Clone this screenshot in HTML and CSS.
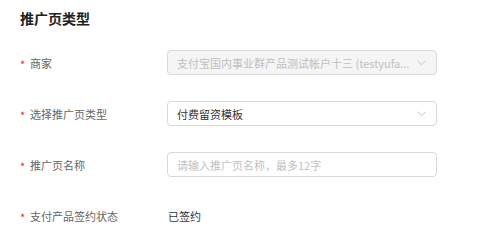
FILE: index.html
```html
<!DOCTYPE html>
<html lang="zh-CN">
<head>
  <meta charset="UTF-8">
  <title>推广页类型</title>
  <link rel="stylesheet" href="styles.css">
</head>
<body>
  <div class="panel">
    <h2 class="title">推广页类型</h2>

    <div class="form">
      <div class="row">
        <label class="label"><span class="req">*</span>商家</label>
        <div class="field select disabled">
          <span class="value">支付宝国内事业群产品测试帐户十三 (testyufa...</span>
          <svg class="arrow" viewBox="0 0 10 6" width="9" height="6"><path d="M0.5 0.5 L5 5 L9.5 0.5" fill="none" stroke="#c0c0c0" stroke-width="1"/></svg>
        </div>
      </div>

      <div class="row">
        <label class="label"><span class="req">*</span>选择推广页类型</label>
        <div class="field select">
          <span class="value">付费留资模板</span>
          <svg class="arrow" viewBox="0 0 10 6" width="9" height="6"><path d="M0.5 0.5 L5 5 L9.5 0.5" fill="none" stroke="#c0c0c0" stroke-width="1"/></svg>
        </div>
      </div>

      <div class="row">
        <label class="label"><span class="req">*</span>推广页名称</label>
        <input class="field input" type="text" placeholder="请输入推广页名称，最多12字">
      </div>

      <div class="row">
        <label class="label"><span class="req">*</span>支付产品签约状态</label>
        <div class="text">已签约</div>
      </div>
    </div>
  </div>
</body>
</html>
```

FILE: styles.css
```css
body {
  margin: 0;
  background: #fff;
  font-family: "Noto Sans CJK SC", "Liberation Sans", sans-serif;
  color: #333;
}

.panel {
  padding: 8px 20px 0 20px;
}

.title {
  margin: 0;
  font-size: 14px;
  font-weight: bold;
  line-height: 20px;
  color: #222;
}

.form {
  display: flex;
  flex-direction: column;
  gap: 26px;
  margin-top: 22px;
}

.row {
  display: flex;
  align-items: center;
  height: 25px;
}

.label {
  width: 147px;
  flex-shrink: 0;
  font-size: 11px;
  color: #666;
  display: flex;
  align-items: center;
}

.req {
  color: #f5222d;
  width: 10px;
  font-size: 11px;
  position: relative;
  top: 1px;
}

.field {
  box-sizing: border-box;
  width: 270px;
  height: 25px;
  border: 1px solid #d9d9d9;
  border-radius: 4px;
  background: #fff;
  font-family: inherit;
  font-size: 11px;
  padding: 0 9px;
}

.select {
  display: flex;
  align-items: center;
  justify-content: space-between;
  color: #333;
}

.select.disabled {
  background: #f5f5f5;
  color: #bfbfbf;
}

.arrow {
  margin-right: 1px;
}

.input {
  outline: none;
  color: #333;
}

.input::placeholder {
  color: #bfbfbf;
}

.text {
  font-size: 11px;
  color: #333;
  padding-left: 1px;
}
```
